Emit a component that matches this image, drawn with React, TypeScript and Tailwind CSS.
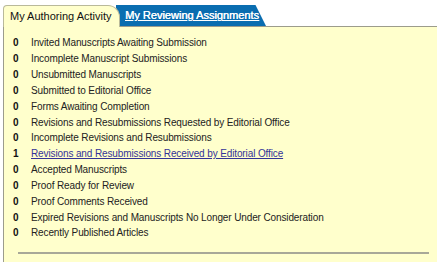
import React from "react";

const rows: [string, string, boolean?][] = [
  ["0", "Invited Manuscripts Awaiting Submission"],
  ["0", "Incomplete Manuscript Submissions"],
  ["0", "Unsubmitted Manuscripts"],
  ["0", "Submitted to Editorial Office"],
  ["0", "Forms Awaiting Completion"],
  ["0", "Revisions and Resubmissions Requested by Editorial Office"],
  ["0", "Incomplete Revisions and Resubmissions"],
  ["1", "Revisions and Resubmissions Received by Editorial Office", true],
  ["0", "Accepted Manuscripts"],
  ["0", "Proof Ready for Review"],
  ["0", "Proof Comments Received"],
  ["0", "Expired Revisions and Manuscripts No Longer Under Consideration"],
  ["0", "Recently Published Articles"],
];

export default function App() {
  return (
    <div className="w-[437px] h-[262px] bg-white overflow-hidden flex flex-col font-['Liberation_Sans',Arial,sans-serif] text-[#222]">
      <div className="flex items-end h-[26px] pl-[3px] pt-[4px] shrink-0">
        <div className="relative z-10 h-[22px] w-[117px] bg-[#ffffcc] border border-b-0 border-[#b9b99a] rounded-tl-[4px] rounded-tr-[12px] flex items-center pl-[6px] text-[11px] text-[#111] whitespace-nowrap -mb-px">
          My Authoring Activity
        </div>
        <div className="-ml-[4px] h-[21px] w-[150px] bg-[#0a6db0] rounded-tr-[8px] [clip-path:polygon(0_0,93%_0,100%_100%,0_100%)] flex items-center pl-[9px] text-[11px] text-white underline whitespace-nowrap [text-shadow:0.4px_0_0_#fff]">
          My Reviewing Assignments
        </div>
      </div>
      <div className="flex-1 bg-[#ffffcc] border-l border-t border-[#9c9c8c] ml-[3px] pt-[8px]">
        {rows.map(([n, t, link], i) => (
          <div key={i} className="flex items-center h-[15.83px] text-[10px] tracking-[-0.12px] whitespace-nowrap">
            <span className="w-[27px] pl-[9px] font-bold text-[#111]">{n}</span>
            {link ? (
              <span className="text-[#333399] underline">{t}</span>
            ) : (
              <span>{t}</span>
            )}
          </div>
        ))}
        <div className="mt-[11px] ml-[14px] w-[411px] h-[2px] bg-[#a8a898]" />
      </div>
    </div>
  );
}
